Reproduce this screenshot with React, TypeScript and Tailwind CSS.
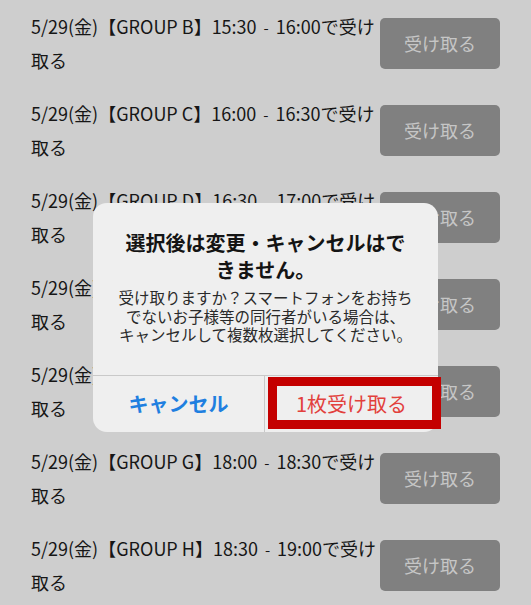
import React from "react";

const rows = [
  { g: "B", a: "15:30", b: "16:00" },
  { g: "C", a: "16:00", b: "16:30" },
  { g: "D", a: "16:30", b: "17:00" },
  { g: "E", a: "17:00", b: "17:30" },
  { g: "F", a: "17:30", b: "18:00" },
  { g: "G", a: "18:00", b: "18:30" },
  { g: "H", a: "18:30", b: "19:00" },
];

const font = { fontFamily: '"Noto Sans CJK JP", "Noto Sans", sans-serif' };

export default function App() {
  return (
    <div
      className="relative w-[531px] h-[605px] overflow-hidden bg-[#cecece]"
      style={font}
    >
      <div className="flex flex-col gap-[21px] pt-[10px] pl-[31px] pr-[31px]">
        {rows.map((r) => (
          <div key={r.g} className="flex items-center justify-between h-[66px]">
            <div className="w-[349px] text-[18px] leading-[33px] text-[#161616]">
              <span className="whitespace-nowrap">
                5/29(金)【GROUP {r.g}】{r.a}
                <span className="mx-[7px] text-[15px]">-</span>
                {r.b}で受け
              </span>
              <br />
              取る
            </div>
            <div className="w-[120px] h-[51px] shrink-0 rounded-[5px] bg-[#808080] flex items-center justify-center text-[18px] text-[#c6c6c6]">
              受け取る
            </div>
          </div>
        ))}
      </div>

      <div className="absolute left-[93px] top-[203px] w-[345px] h-[229px] rounded-[14px] bg-[#efefef] flex flex-col overflow-hidden">
        <div className="flex-1 flex flex-col items-center pt-[26px] px-[20px] text-center">
          <div className="text-[20px] leading-[27px] font-bold text-[#141414]">
            選択後は変更・キャンセルはで
            <br />
            きません。
          </div>
          <div className="mt-[5px] text-[15.5px] leading-[18.5px] text-[#2a2a2a]">
            受け取りますか？スマートフォンをお持ち
            <br />
            でないお子様等の同行者がいる場合は、
            <br />
            キャンセルして複数枚選択してください。
          </div>
        </div>
        <div className="h-[57px] flex border-t border-[#c9c9c9]">
          <div className="w-[172px] flex items-center justify-center text-[20px] font-bold text-[#1f7fe0] border-r border-[#c9c9c9]">
            キャンセル
          </div>
          <div className="flex-1 flex items-center justify-center text-[20px] text-[#e2403c]">
            1枚受け取る
          </div>
        </div>
      </div>

      <div className="absolute left-[268px] top-[377px] w-[173px] h-[52px] border-[9px] border-[#c40000]" />
    </div>
  );
}
